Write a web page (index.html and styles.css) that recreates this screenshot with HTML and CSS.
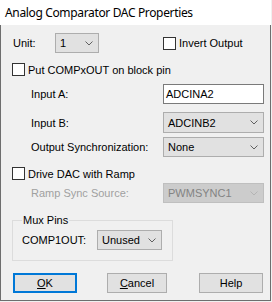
FILE: index.html
```html
<!DOCTYPE html>
<html>
<head>
<meta charset="utf-8">
<link rel="stylesheet" href="styles.css">
</head>
<body>
<div class="window">
  <div class="titlebar">Analog Comparator DAC Properties</div>
  <div class="content">
    <div class="row row-unit">
      <span class="unit-label">Unit:</span>
      <div class="combo combo-unit"><span>1</span><svg class="chev" width="8" height="5" viewBox="0 0 8 5"><polyline points="0.5,0.5 4,4 7.5,0.5" fill="none" stroke="#606060" stroke-width="1"/></svg></div>
      <label class="check check-right"><span class="box"></span><span>Invert Output</span></label>
    </div>
    <div class="row row-check r2">
      <label class="check"><span class="box"></span><span>Put COMPxOUT on block pin</span></label>
    </div>
    <div class="row row-field r3">
      <span class="lbl">Input A:</span>
      <div class="textbox">ADCINA2</div>
    </div>
    <div class="row row-field r4">
      <span class="lbl">Input B:</span>
      <div class="combo combo-wide"><span>ADCINB2</span><svg class="chev" width="8" height="5" viewBox="0 0 8 5"><polyline points="0.5,0.5 4,4 7.5,0.5" fill="none" stroke="#606060" stroke-width="1"/></svg></div>
    </div>
    <div class="row row-field r5">
      <span class="lbl">Output Synchronization:</span>
      <div class="combo combo-wide"><span>None</span><svg class="chev" width="8" height="5" viewBox="0 0 8 5"><polyline points="0.5,0.5 4,4 7.5,0.5" fill="none" stroke="#606060" stroke-width="1"/></svg></div>
    </div>
    <div class="row row-check r6">
      <label class="check"><span class="box"></span><span>Drive DAC with Ramp</span></label>
    </div>
    <div class="row row-field r7">
      <span class="lbl disabled">Ramp Sync Source:</span>
      <div class="combo combo-wide combo-disabled"><span>PWMSYNC1</span><svg class="chev" width="8" height="5" viewBox="0 0 8 5"><polyline points="0.5,0.5 4,4 7.5,0.5" fill="none" stroke="#b4b4b4" stroke-width="1"/></svg></div>
    </div>
    <fieldset class="group">
      <legend>Mux Pins</legend>
      <div class="group-row">
        <span class="comp-label">COMP1OUT:</span>
        <div class="combo combo-mux"><span>Unused</span><svg class="chev" width="8" height="5" viewBox="0 0 8 5"><polyline points="0.5,0.5 4,4 7.5,0.5" fill="none" stroke="#606060" stroke-width="1"/></svg></div>
      </div>
    </fieldset>
    <div class="buttons">
      <button class="btn btn-ok"><u>O</u>K</button>
      <button class="btn btn-cancel"><u>C</u>ancel</button>
      <button class="btn btn-help">Help</button>
    </div>
  </div>
</div>
</body>
</html>
```
FILE: styles.css
```css
* { box-sizing: border-box; }
html, body { margin: 0; padding: 0; background: #f0f0f0; }
body { width: 272px; height: 302px; overflow: hidden; }

.window {
  width: 271px;
  height: 301px;
  background: #f0f0f0;
  font-family: "Liberation Sans", Arial, sans-serif;
  font-size: 11px;
  color: #000;
  display: flex;
  flex-direction: column;
}

.titlebar {
  height: 25px;
  background: #fff;
  font-family: "Noto Sans", "Open Sans", sans-serif;
  font-size: 12px;
  letter-spacing: -0.35px;
  line-height: 25px;
  padding-left: 5px;
  white-space: nowrap;
  color: #000;
}

.content {
  flex: 1;
  border-left: 1px solid #6e6e6e;
  border-right: 1px solid #6e6e6e;
  border-bottom: 1px solid #6e6e6e;
  padding: 8px 6px 0 11px;
  display: flex;
  flex-direction: column;
}

.row { display: flex; align-items: center; }
.row-unit { height: 20px; }
.row-check { height: 13px; }
.row-field { height: 20px; padding-left: 19px; }
.r2 { margin-top: 10px; }
.r3 { margin-top: 8px; }
.r4 { margin-top: 8px; height: 21px; }
.r5 { margin-top: 4px; }
.r6 { margin-top: 10px; }
.r7 { margin-top: 3px; }

.unit-label { width: 43px; padding-left: 1px; }
.lbl { flex: 1; white-space: nowrap; }
.disabled { color: #a0a0a0; }

.check { display: flex; align-items: center; white-space: nowrap; }
.check-right { margin-left: auto; width: 101px; }
.box {
  width: 13px; height: 13px;
  background: #fff;
  border: 1px solid #333;
  margin-right: 3px;
  flex: none;
}

.combo {
  height: 100%;
  background: #e1e1e1;
  border: 1px solid #adadad;
  display: flex;
  align-items: center;
  justify-content: space-between;
  padding: 0 5px 0 4px;
}
.combo-unit { width: 44px; }
.combo-wide { width: 101px; }
.combo-mux { width: 65px; height: 20px; }
.combo-disabled { background: #cccccc; border-color: #bfbfbf; color: #838383; }
.chev { flex: none; }

.textbox {
  width: 101px;
  height: 100%;
  background: #fff;
  border: 1px solid #7a7a7a;
  display: flex;
  align-items: center;
  padding-left: 2px;
}

.group {
  margin: 11px 0 0 0;
  width: 161px;
  height: 47px;
  border: 1px solid #dcdcdc;
  padding: 0 0 0 9px;
}
.group legend {
  padding: 0 1px;
  margin-left: 0;
  line-height: 13px;
}
.group-row {
  display: flex;
  align-items: center;
  margin-top: 3px;
}
.comp-label { width: 75px; }

.buttons {
  display: flex;
  margin-top: 12px;
  margin-left: 1px;
}
.btn {
  height: 20px;
  background: #e1e1e1;
  border: 1px solid #adadad;
  font-family: "Liberation Sans", Arial, sans-serif;
  font-size: 11px;
  color: #000;
  padding: 0;
  margin: 0;
}
.btn u { text-underline-offset: 1px; }
.btn-ok { width: 64px; border: 2px solid #0078d7; }
.btn-cancel { width: 60px; margin-left: 30px; }
.btn-help { width: 64px; margin-left: 32px; }
```
